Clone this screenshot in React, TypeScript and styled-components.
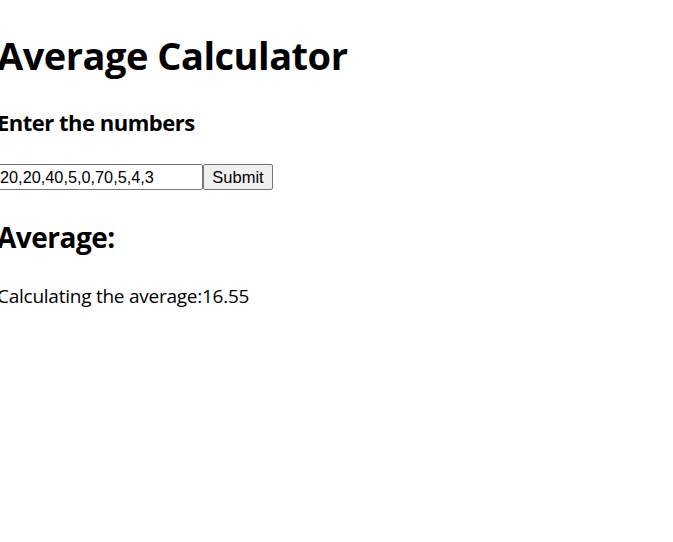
import { useState } from "react";
import styled, { createGlobalStyle } from "styled-components";

const GlobalStyle = createGlobalStyle`
    body {
        margin: 0;
        background: #ffffff;
        font-family: "Open Sans", "Noto Sans", sans-serif;
        color: #000;
    }
`;

const Container = styled.div`
    display: flex;
    flex-direction: column;
    align-items: flex-start;
    margin-left: -4px;
    padding-top: 29px;
`;
const Title = styled.h1`
    font-size: 38px;
    font-weight: 700;
    letter-spacing: -0.5px;
    margin: 0 0 26px 1px;
    line-height: normal;
`;
const SubTitle = styled.h3`
    font-size: 22px;
    font-weight: 700;
    letter-spacing: -0.5px;
    margin: 0 0 27px 1px;
    line-height: normal;
`;
const Form = styled.form`
    display: flex;
    align-items: stretch;
    margin: 0 0 28px;
`;
const NumbersInput = styled.input`
    width: 207px;
    height: 26px;
    box-sizing: border-box;
    font-family: "Liberation Sans", Arial, sans-serif;
    font-size: 16.3px;
    padding: 1px 3px;
    border: 1px solid #767676;
    border-radius: 2px;
    margin: 0;
    color: #000;
`;
const SubmitButton = styled.button`
    width: 70px;
    height: 26px;
    padding: 0;
    font-family: "Liberation Sans", Arial, sans-serif;
    font-size: 16.5px;
    color: #000;
    background: #efefef;
    border: 1px solid #767676;
    border-radius: 2px;
    margin: 0;
`;
const ResultTitle = styled.h2`
    font-size: 28px;
    font-weight: 700;
    letter-spacing: -0.5px;
    margin: 0 0 27px 1px;
    line-height: normal;
`;
const ResultText = styled.p`
    font-size: 19px;
    letter-spacing: -0.25px;
    margin: 0 0 0 1px;
    line-height: normal;
`;

function App() {
    const [value, setValue] = useState("20,20,40,5,0,70,5,4,3");
    const [average, setAverage] = useState(16.55);

    const onSubmit = (e: React.FormEvent) => {
        e.preventDefault();
        const nums = value.split(",").map(Number).filter(n => !isNaN(n));
        if (nums.length) setAverage(Math.round((nums.reduce((a, b) => a + b, 0) / nums.length) * 100) / 100);
    };

    return <Container>
        <GlobalStyle />
        <Title>Average Calculator</Title>
        <SubTitle>Enter the numbers</SubTitle>
        <Form onSubmit={onSubmit}>
            <NumbersInput value={value} onChange={e => setValue(e.target.value)} />
            <SubmitButton type="submit">Submit</SubmitButton>
        </Form>
        <ResultTitle>Average:</ResultTitle>
        <ResultText>Calculating the average:{average}</ResultText>
    </Container>
}

export default App;
